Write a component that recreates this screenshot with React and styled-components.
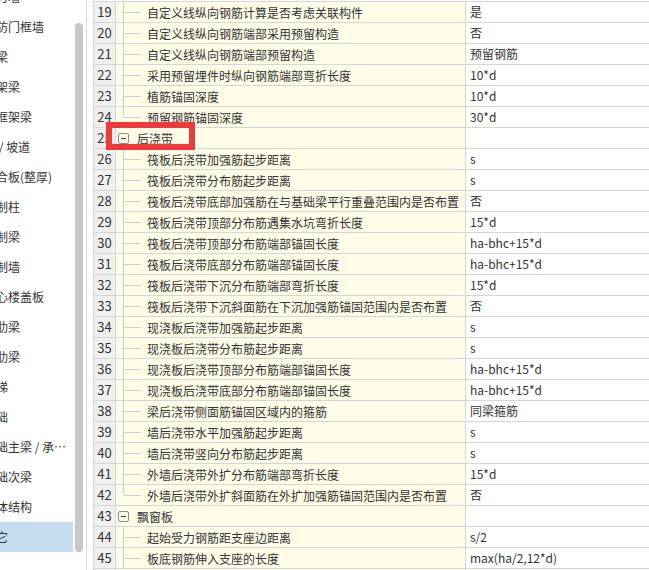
import styled, { createGlobalStyle } from "styled-components";

const GlobalStyle = createGlobalStyle`
  html, body {
    margin: 0;
    padding: 0;
    background: #fff;
  }
  body {
    font-family: "Noto Sans CJK SC", "Noto Sans", sans-serif;
    font-size: 12px;
    color: #333;
  }
`;

const navItems = [
  "剪力墙",
  "人防门框墙",
  "连梁",
  "框架梁",
  "非框架梁",
  "板 / 坡道",
  "叠合板(整厚)",
  "预制柱",
  "预制梁",
  "预制墙",
  "空心楼盖板",
  "主肋梁",
  "次肋梁",
  "楼梯",
  "基础",
  "基础主梁 / 承台梁",
  "基础次梁",
  "砌体结构",
  "其它",
];

const rows = [
  { no: 19, name: "自定义线纵向钢筋计算是否考虑关联构件", value: "是" },
  { no: 20, name: "自定义线纵向钢筋端部采用预留构造", value: "否" },
  { no: 21, name: "自定义线纵向钢筋端部预留构造", value: "预留钢筋" },
  { no: 22, name: "采用预留埋件时纵向钢筋端部弯折长度", value: "10*d" },
  { no: 23, name: "植筋锚固深度", value: "10*d" },
  { no: 24, name: "预留钢筋锚固深度", value: "30*d", last: true },
  { no: 25, name: "后浇带", group: true },
  { no: 26, name: "筏板后浇带加强筋起步距离", value: "s" },
  { no: 27, name: "筏板后浇带分布筋起步距离", value: "s" },
  { no: 28, name: "筏板后浇带底部加强筋在与基础梁平行重叠范围内是否布置", value: "否" },
  { no: 29, name: "筏板后浇带顶部分布筋遇集水坑弯折长度", value: "15*d" },
  { no: 30, name: "筏板后浇带顶部分布筋端部锚固长度", value: "ha-bhc+15*d" },
  { no: 31, name: "筏板后浇带底部分布筋端部锚固长度", value: "ha-bhc+15*d" },
  { no: 32, name: "筏板后浇带下沉分布筋端部弯折长度", value: "15*d" },
  { no: 33, name: "筏板后浇带下沉斜面筋在下沉加强筋锚固范围内是否布置", value: "否" },
  { no: 34, name: "现浇板后浇带加强筋起步距离", value: "s" },
  { no: 35, name: "现浇板后浇带分布筋起步距离", value: "s" },
  { no: 36, name: "现浇板后浇带顶部分布筋端部锚固长度", value: "ha-bhc+15*d" },
  { no: 37, name: "现浇板后浇带底部分布筋端部锚固长度", value: "ha-bhc+15*d" },
  { no: 38, name: "梁后浇带侧面筋锚固区域内的箍筋", value: "同梁箍筋" },
  { no: 39, name: "墙后浇带水平加强筋起步距离", value: "s" },
  { no: 40, name: "墙后浇带竖向分布筋起步距离", value: "s" },
  { no: 41, name: "外墙后浇带外扩分布筋端部弯折长度", value: "15*d" },
  { no: 42, name: "外墙后浇带外扩斜面筋在外扩加强筋锚固范围内是否布置", value: "否", last: true },
  { no: 43, name: "飘窗板", group: true },
  { no: 44, name: "起始受力钢筋距支座边距离", value: "s/2" },
  { no: 45, name: "板底钢筋伸入支座的长度", value: "max(ha/2,12*d)" },
  { no: 46, name: "", value: "" },
];

const App = () => {
  return (
    <Page>
      <GlobalStyle />
      <Sidebar>
        <NavList>
          {navItems.map((item) => (
            <NavItem key={item} $active={item === "其它"}>
              {item}
            </NavItem>
          ))}
        </NavList>
        <ScrollTrack>
          <ScrollThumb />
        </ScrollTrack>
      </Sidebar>
      <Main>
        <Table>
          {rows.map((row) => (
            <Row key={row.no}>
              <NumCell>{row.no}</NumCell>
              {row.group ? (
                <NameCell>
                  <Toggle />
                  <GroupLabel>{row.name}</GroupLabel>
                </NameCell>
              ) : (
                <NameCell $tree={row.name !== ""} $last={row.last}>
                  {row.name}
                </NameCell>
              )}
              <ValueCell>{row.value}</ValueCell>
            </Row>
          ))}
        </Table>
      </Main>
      <Highlight />
    </Page>
  );
};

const Page = styled.div`
  position: relative;
  display: flex;
  width: 649px;
  height: 570px;
  overflow: hidden;
  background: #fff;
`;

const Sidebar = styled.div`
  display: flex;
  width: 86px;
  flex-shrink: 0;
  border-right: 1px solid #dcdcdc;
`;

const NavList = styled.div`
  width: 73px;
  margin-top: -18px;
  display: flex;
  flex-direction: column;
`;

const NavItem = styled.div`
  height: 30px;
  line-height: 30px;
  padding-right: 2px;
  text-indent: -16px;
  white-space: nowrap;
  overflow: hidden;
  text-overflow: ellipsis;
  color: #333;
  background: ${(p) => (p.$active ? "#c5dbf0" : "transparent")};
`;

const ScrollTrack = styled.div`
  width: 13px;
  padding: 23px 0 0 2px;
  box-sizing: border-box;
`;

const ScrollThumb = styled.div`
  width: 8px;
  height: 529px;
  border-radius: 4px;
  background: #c8c8c8;
`;

const Main = styled.div`
  flex: 1;
  padding: 1px 0 0 6px;
  min-width: 0;
`;

const Table = styled.div`
  display: flex;
  flex-direction: column;
  border-top: 1px solid #d6d6d6;
  border-left: 1px solid #d6d6d6;
`;

const Row = styled.div`
  display: flex;
  height: 21px;
  box-sizing: border-box;
  border-bottom: 1px solid #d6d6d6;
`;

const NumCell = styled.div`
  width: 22px;
  flex-shrink: 0;
  box-sizing: border-box;
  border-right: 1px solid #d6d6d6;
  background: #f0f0f0;
  text-align: center;
  line-height: 20px;
  font-size: 13px;
  color: #333;
`;

const NameCell = styled.div`
  position: relative;
  width: 350px;
  flex-shrink: 0;
  box-sizing: border-box;
  border-right: 1px solid #d6d6d6;
  background: #fffde8;
  display: flex;
  align-items: center;
  padding-left: ${(p) => (p.$tree ? "31px" : "2px")};
  white-space: nowrap;
  overflow: hidden;

  ${(p) =>
    p.$tree &&
    `
    &::before {
      content: "";
      position: absolute;
      left: 7px;
      top: -1px;
      height: ${p.$last ? "11px" : "22px"};
      border-left: 1px solid #cfcfcf;
    }
    &::after {
      content: "";
      position: absolute;
      left: 8px;
      top: 10px;
      width: 17px;
      border-top: 1px solid #cfcfcf;
    }
  `}
`;

const Toggle = styled.span`
  position: relative;
  width: 11px;
  height: 11px;
  box-sizing: border-box;
  border: 1px solid #8c8c8c;
  border-radius: 2px;
  flex-shrink: 0;

  &::after {
    content: "";
    position: absolute;
    left: 2px;
    top: 4px;
    width: 5px;
    border-top: 1px solid #444;
  }
`;

const GroupLabel = styled.span`
  margin-left: 8px;
  color: #333;
`;

const ValueCell = styled.div`
  flex: 1;
  padding-left: 4px;
  line-height: 20px;
  white-space: nowrap;
  color: #333;
`;

const Highlight = styled.div`
  position: absolute;
  left: 106px;
  top: 122px;
  width: 89px;
  height: 28px;
  box-sizing: border-box;
  border: 6px solid #ee3a3a;
  pointer-events: none;
`;

export default App;
